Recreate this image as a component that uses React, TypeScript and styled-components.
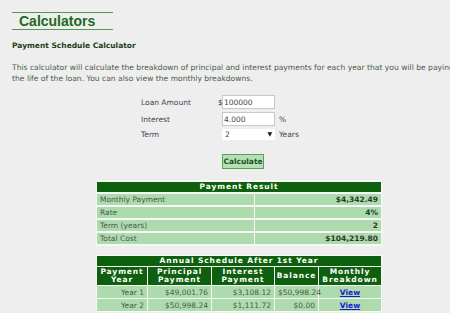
import React from 'react';
import styled, {createGlobalStyle} from "styled-components";

const GlobalStyle = createGlobalStyle`
  html, body {
    margin: 0;
    padding: 0;
    background: #eeeeee;
    overflow: hidden;
  }
  body {
    font-family: "DejaVu Sans", Verdana, sans-serif;
    font-size: 7.5px;
    color: #444;
  }
`

const Page = styled.div`
  width: 454px;
  padding: 12px 12px 0 12px;
`

const TitleBar = styled.div`
  box-sizing: border-box;
  width: 101px;
  height: 18px;
  border-top: 1px solid #4f9a4f;
  border-bottom: 1px solid #4f9a4f;
  display: flex;
  align-items: center;
  padding-left: 7px;
`

const Title = styled.h1`
  margin: 0;
  font-family: "Liberation Sans", Arial, sans-serif;
  font-size: 14px;
  font-weight: bold;
  color: #1c6a1c;
`

const SubTitle = styled.h2`
  margin: 11px 0 0 0;
  font-size: 7.5px;
  font-weight: bold;
  color: #263a1c;
`

const Intro = styled.p`
  margin: 12px 0 0 0;
  font-size: 7.6px;
  line-height: 11px;
  color: #4a5a4a;
  white-space: nowrap;
`

const Form = styled.form`
  margin: 11px 0 0 129px;
  display: grid;
  grid-template-columns: 77px 4px 53px auto;
  row-gap: 3px;
  align-items: center;
`

const Label = styled.span`
  color: #445;
`

const Prefix = styled.span`
  color: #333;
`

const Suffix = styled.span`
  padding-left: 4px;
  color: #445;
`

const Field = styled.input`
  box-sizing: border-box;
  width: 53px;
  height: 14px;
  border: 1px solid #c8c8c8;
  background: #fff;
  font: inherit;
  color: #444;
  padding: 0 1px;
  outline: none;
`

const SelectWrap = styled.span`
  position: relative;
  display: block;
  width: 53px;
  height: 11px;
`

const Select = styled.select`
  appearance: none;
  box-sizing: border-box;
  width: 53px;
  height: 11px;
  border: none;
  background: #fff;
  font: inherit;
  color: #444;
  padding: 0 0 0 3px;
  outline: none;
`

const Arrow = styled.span`
  position: absolute;
  right: 3px;
  top: 1px;
  font-size: 6px;
  color: #111;
  pointer-events: none;
`

const ButtonRow = styled.div`
  margin: 14px 0 0 210px;
`

const Button = styled.button`
  box-sizing: border-box;
  height: 15px;
  width: 42px;
  padding: 0;
  background: #b5dfb5;
  border: 1px solid #5a9f5a;
  font-family: "DejaVu Sans", Verdana, sans-serif;
  font-size: 7.5px;
  font-weight: bold;
  color: #1f4f1f;
`

const Table = styled.table<{ $top: number; $gap: number }>`
  table-layout: fixed;
  width: 286px;
  margin: ${p => p.$top}px auto 0 auto;
  border-collapse: separate;
  border-spacing: 1px ${p => p.$gap}px;
  background: #f6f8f6;
`

const Head = styled.th<{ $h?: number }>`
  background: #0e600e;
  color: #fff;
  font-weight: bold;
  letter-spacing: 0.9px;
  text-align: center;
  height: ${p => p.$h ?? 10}px;
  padding: 0;
  line-height: 8px;
  white-space: nowrap;
  overflow: hidden;
`

const Cell = styled.td<{ $align?: string; $bold?: boolean; $h?: number }>`
  background: #addbad;
  height: ${p => p.$h ?? 11}px;
  padding: 0 3px;
  text-align: ${p => p.$align ?? 'left'};
  font-weight: ${p => (p.$bold ? 'bold' : 'normal')};
  color: ${p => (p.$bold ? '#2a3a2a' : '#4a5a4a')};
  white-space: nowrap;
`

const ViewLink = styled.a`
  color: #1a1ad0;
  font-weight: bold;
  text-decoration: underline;
`

const result = [
    ['Monthly Payment', '$4,342.49'],
    ['Rate', '4%'],
    ['Term (years)', '2'],
    ['Total Cost', '$104,219.80'],
];

const schedule = [
    ['Year 1', '$49,001.76', '$3,108.12', '$50,998.24'],
    ['Year 2', '$50,998.24', '$1,111.72', '$0.00'],
];

export default function App() {
    return (
        <Page>
            <GlobalStyle/>
            <TitleBar>
                <Title>Calculators</Title>
            </TitleBar>
            <SubTitle>Payment Schedule Calculator</SubTitle>
            <Intro>
                This calculator will calculate the breakdown of principal and interest payments for each year that you will be paying over
                <br/>
                the life of the loan. You can also view the monthly breakdowns.
            </Intro>
            <Form onSubmit={e => e.preventDefault()}>
                <Label>Loan Amount</Label>
                <Prefix>$</Prefix>
                <Field defaultValue="100000"/>
                <span/>
                <Label>Interest</Label>
                <span/>
                <Field defaultValue="4.000"/>
                <Suffix>%</Suffix>
                <Label>Term</Label>
                <span/>
                <SelectWrap>
                    <Select defaultValue="2">
                        <option>1</option>
                        <option>2</option>
                        <option>3</option>
                        <option>4</option>
                        <option>5</option>
                    </Select>
                    <Arrow>▼</Arrow>
                </SelectWrap>
                <Suffix>Years</Suffix>
            </Form>
            <ButtonRow>
                <Button type="button">Calculate</Button>
            </ButtonRow>
            <Table $top={11} $gap={2}>
                <colgroup>
                    <col style={{width: '157px'}}/>
                    <col style={{width: '126px'}}/>
                </colgroup>
                <thead>
                <tr>
                    <Head colSpan={2}>Payment Result</Head>
                </tr>
                </thead>
                <tbody>
                {result.map(([label, value]) => (
                    <tr key={label}>
                        <Cell>{label}</Cell>
                        <Cell $align="right" $bold>{value}</Cell>
                    </tr>
                ))}
                </tbody>
            </Table>
            <Table $top={9} $gap={1}>
                <colgroup>
                    <col style={{width: '50px'}}/>
                    <col style={{width: '63px'}}/>
                    <col style={{width: '62px'}}/>
                    <col style={{width: '43px'}}/>
                    <col style={{width: '62px'}}/>
                </colgroup>
                <thead>
                <tr>
                    <Head colSpan={5}>Annual Schedule After 1st Year</Head>
                </tr>
                <tr>
                    <Head $h={18}>Payment<br/>Year</Head>
                    <Head $h={18}>Principal<br/>Payment</Head>
                    <Head $h={18}>Interest<br/>Payment</Head>
                    <Head $h={18}>Balance</Head>
                    <Head $h={18}>Monthly<br/>Breakdown</Head>
                </tr>
                </thead>
                <tbody>
                {schedule.map(([year, principal, interest, balance]) => (
                    <tr key={year}>
                        <Cell $align="right" $h={12}>{year}</Cell>
                        <Cell $align="right" $h={12}>{principal}</Cell>
                        <Cell $align="right" $h={12}>{interest}</Cell>
                        <Cell $align="right" $h={12}>{balance}</Cell>
                        <Cell $align="center" $h={12}><ViewLink href="#">View</ViewLink></Cell>
                    </tr>
                ))}
                </tbody>
            </Table>
        </Page>
    );
}
